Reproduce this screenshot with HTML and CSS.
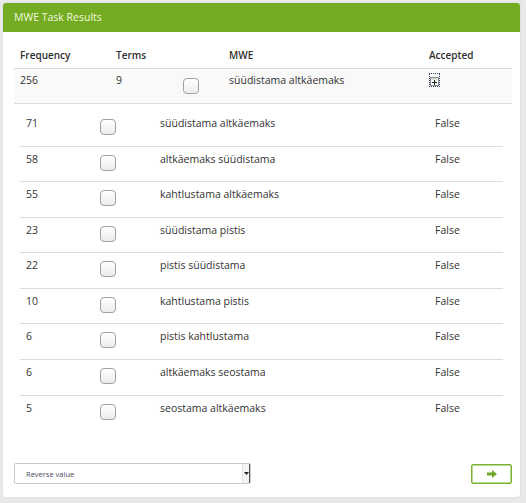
FILE: index.html
```html
<!DOCTYPE html>
<html lang="et">
<head>
<meta charset="utf-8">
<title>MWE Task Results</title>
<link rel="stylesheet" href="styles.css">
</head>
<body>
<div class="panel">
  <div class="panel-heading">MWE Task Results</div>
  <div class="panel-body">
    <div class="results">
      <div class="row head">
        <div class="cell">Frequency</div>
        <div class="cell">Terms</div>
        <div class="cell"></div>
        <div class="cell">MWE</div>
        <div class="cell">Accepted</div>
      </div>
      <div class="row main">
        <div class="cell">256</div>
        <div class="cell">9</div>
        <div class="cell"><span class="check"></span></div>
        <div class="cell">süüdistama altkäemaks</div>
        <div class="cell"><span class="expand"><svg width="9" height="9" viewBox="0 0 9 9"><rect x="0.5" y="0.5" width="8" height="8" fill="#fff" stroke="#8a8a8a"/><rect x="1" y="1" width="7" height="2" fill="#dcdcdc"/><path d="M2 5.5h5M4.5 3v5" stroke="#222" stroke-width="1"/></svg></span></div>
      </div>
      <div class="nested-wrap">
        <div class="nested">
          <div class="nrow"><div class="cell">71</div><div class="cell"><span class="check"></span></div><div class="cell">süüdistama altkäemaks</div><div class="cell">False</div></div>
          <div class="nrow"><div class="cell">58</div><div class="cell"><span class="check"></span></div><div class="cell">altkäemaks süüdistama</div><div class="cell">False</div></div>
          <div class="nrow"><div class="cell">55</div><div class="cell"><span class="check"></span></div><div class="cell">kahtlustama altkäemaks</div><div class="cell">False</div></div>
          <div class="nrow"><div class="cell">23</div><div class="cell"><span class="check"></span></div><div class="cell">süüdistama pistis</div><div class="cell">False</div></div>
          <div class="nrow"><div class="cell">22</div><div class="cell"><span class="check"></span></div><div class="cell">pistis süüdistama</div><div class="cell">False</div></div>
          <div class="nrow"><div class="cell">10</div><div class="cell"><span class="check"></span></div><div class="cell">kahtlustama pistis</div><div class="cell">False</div></div>
          <div class="nrow"><div class="cell">6</div><div class="cell"><span class="check"></span></div><div class="cell">pistis kahtlustama</div><div class="cell">False</div></div>
          <div class="nrow"><div class="cell">6</div><div class="cell"><span class="check"></span></div><div class="cell">altkäemaks seostama</div><div class="cell">False</div></div>
          <div class="nrow"><div class="cell">5</div><div class="cell"><span class="check"></span></div><div class="cell">seostama altkäemaks</div><div class="cell">False</div></div>
        </div>
      </div>
    </div>
    <div class="footer">
      <div class="select"><span class="select-text">Reverse value</span><span class="select-arrow"><svg width="5" height="3" viewBox="0 0 5 3"><path d="M0 0h5L2.5 3z" fill="#222"/></svg></span></div>
      <div class="go"><svg width="10" height="8" viewBox="0 0 10 8"><path d="M0 2.6h5V0l5 4-5 4V5.4H0z" fill="#6fa82a"/></svg></div>
    </div>
  </div>
</div>
</body>
</html>
```
FILE: styles.css
```css
html, body {
  margin: 0;
  padding: 0;
}
body {
  background: #e9e9e9;
  padding: 3px 0 0 3px;
  font-family: "Open Sans", "DejaVu Sans", sans-serif;
  font-size: 10.5px;
  color: #333;
  height: 500px;
  box-sizing: border-box;
}
.panel {
  width: 517px;
  height: 494px;
  background: #fff;
  border-radius: 3px;
  box-shadow: 0 0 2px rgba(0,0,0,0.12);
  display: flex;
  flex-direction: column;
}
.panel-heading {
  height: 29px;
  background: #73ac23;
  border-radius: 3px 3px 0 0;
  color: #f2f7dc;
  padding-left: 11px;
  line-height: 29px;
  font-size: 10.5px;
  box-sizing: border-box;
}
.panel-body {
  padding: 10px 8px 13px 11px;
  flex: 1;
  display: flex;
  flex-direction: column;
}
.results {
  width: 498px;
}
.row {
  display: grid;
  grid-template-columns: 96px 67px 46px 200px 89px;
}
.cell {
  padding: 0 6px;
  line-height: 18px;
}
.head {
  height: 27px;
  border-bottom: 1px solid #dcdcdc;
  box-sizing: border-box;
}
.head .cell {
  padding-top: 4px;
  font-weight: 600;
  font-size: 10px;
  color: #2f2f2f;
}
.main {
  height: 35px;
  background: #f9f9f9;
  border-bottom: 1px solid #dcdcdc;
  box-sizing: border-box;
}
.main .cell {
  padding-top: 2px;
}
.main .check {
  margin-top: 7px;
}
.check {
  display: block;
  width: 14px;
  height: 14px;
  border: 1px solid #a0a0a0;
  border-radius: 4px;
  background: linear-gradient(#ffffff, #ececec);
  box-shadow: inset 0 1px 1px rgba(255,255,255,0.8);
}
.expand {
  display: inline-block;
  margin-top: 3px;
  width: 9px;
  height: 12px;
  outline: 1px dotted #2a3a6a;
  outline-offset: 0;
  vertical-align: top;
  margin-left: 1px;
}
.expand svg {
  display: block;
  margin-top: 3px;
}
.nested-wrap {
  padding: 6px 9px 0 6px;
}
.nested {
  width: 483px;
}
.nrow {
  display: grid;
  grid-template-columns: 74px 60px 275px 74px;
  height: 35.57px;
  box-sizing: border-box;
}
.nrow + .nrow {
  border-top: 1px solid #dcdcdc;
}
.nrow .cell {
  padding-top: 4px;
}
.nrow .check {
  margin-top: 5px;
}
.nrow + .nrow .cell {
  padding-top: 3px;
}
.footer {
  margin-top: auto;
  display: flex;
  justify-content: space-between;
  align-items: flex-start;
  width: 498px;
}
.select {
  width: 237px;
  height: 21px;
  border: 1px solid #c8c8c8;
  border-radius: 2px;
  box-sizing: border-box;
  display: flex;
  align-items: center;
  justify-content: space-between;
  background: #fff;
}
.select-text {
  font-size: 7.5px;
  color: #4a4a5a;
  padding-left: 11px;
}
.select-arrow {
  width: 6px;
  height: 19px;
  border-left: 1px solid #e4e4e4;
  border-right: 1px solid #555;
  display: flex;
  align-items: center;
  justify-content: center;
  background: #f4f4f4;
}
.select-arrow svg {
  display: block;
}
.go {
  margin-top: 1px;
  width: 41px;
  height: 20px;
  border: 1px solid #79b130;
  box-shadow: inset 0 0 0 0.5px #79b130;
  border-radius: 2px;
  box-sizing: border-box;
  display: flex;
  align-items: center;
  justify-content: center;
  background: #fff;
}
.go svg {
  display: block;
}
```
